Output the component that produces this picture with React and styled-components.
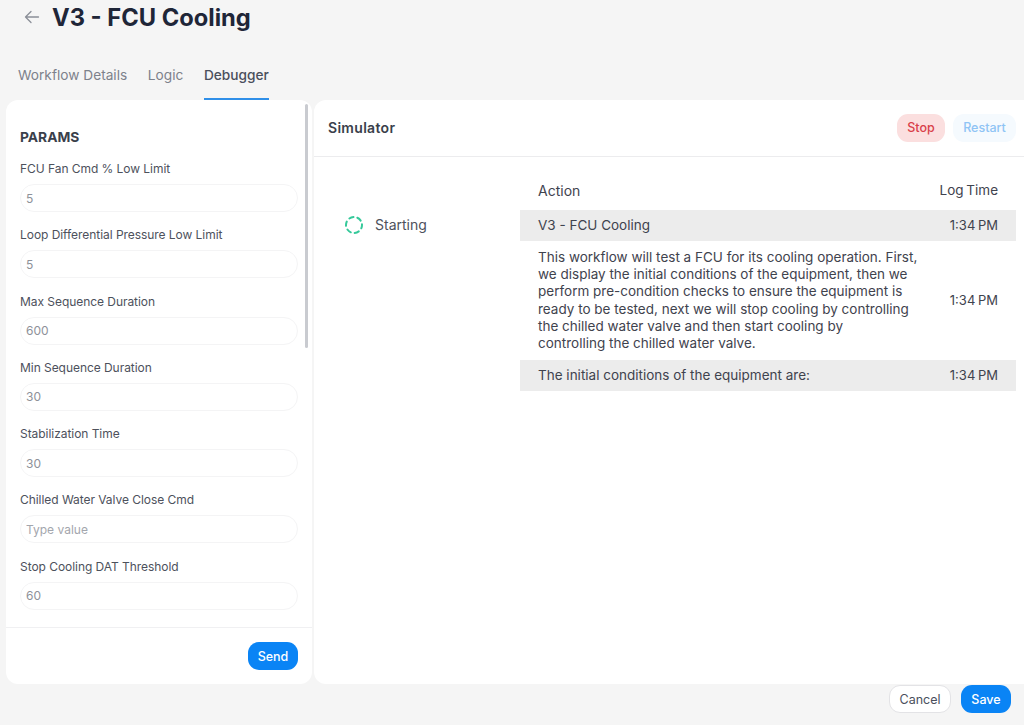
import React from "react";
import styled, { createGlobalStyle } from "styled-components";

const GlobalStyle = createGlobalStyle`
  html, body { margin: 0; padding: 0; background: #f5f5f5; }
  * { box-sizing: border-box; }
  body { font-family: Inter, "Noto Sans", sans-serif; color: #2f3542; }
`;

const Page = styled.div`
  width: 1024px;
  height: 725px;
  overflow: hidden;
  display: flex;
  flex-direction: column;
`;

const TitleBar = styled.div`
  height: 34px;
  display: flex;
  align-items: center;
  padding-left: 24px;
  gap: 12px;
`;

const BackButton = styled.button`
  border: 0;
  background: none;
  padding: 0;
  display: flex;
  color: #8b8f98;
`;

const Title = styled.h1`
  margin: 0;
  font-size: 23.7px;
  font-weight: 700;
  color: #1f2638;
`;

const Tabs = styled.div`
  display: flex;
  gap: 20.6px;
  padding: 24px 0 0 18px;
  height: 66px;
`;

const Tab = styled.div`
  height: 42px;
  padding-top: 9px;
  font-size: 13.7px;
  font-weight: ${(p) => (p.$active ? 500 : 400)};
  color: ${(p) => (p.$active ? "#4a4f5c" : "#7d818b")};
  border-bottom: 2px solid ${(p) => (p.$active ? "#2f8fe8" : "transparent")};
`;

const Panels = styled.div`
  display: flex;
  gap: 2px;
  padding-left: 6px;
  height: 584px;
`;

const ParamsPanel = styled.aside`
  position: relative;
  width: 306px;
  background: #fff;
  border-radius: 12px;
  display: flex;
  flex-direction: column;
  overflow: hidden;
`;

const ScrollThumb = styled.div`
  position: absolute;
  top: 4px;
  right: 4px;
  width: 3px;
  height: 244px;
  border-radius: 2px;
  background: #c9cbd0;
`;

const ParamsList = styled.div`
  flex: 1;
  overflow: hidden;
  padding: 29px 14px 0;
`;

const ParamsTitle = styled.h2`
  margin: 0 0 15px;
  font-size: 13.8px;
  line-height: 17px;
  font-weight: 700;
  color: #3a3f4b;
`;

const Field = styled.div`
  height: 66.3px;
`;

const FieldLabel = styled.label`
  display: block;
  font-size: 12px;
  line-height: 16px;
  font-weight: 400;
  letter-spacing: -0.05px;
  color: #4d515c;
  margin-bottom: 7px;
`;

const FieldInput = styled.input`
  display: block;
  width: 100%;
  height: 28px;
  border: 1px solid #f4f4f5;
  border-radius: 14px;
  padding: 0 5px;
  font: 400 12px Inter, sans-serif;
  color: #8e9199;
  background: #fff;
  outline: none;
  &::placeholder { color: #a3a6ad; opacity: 1; }
`;

const ParamsFooter = styled.div`
  height: 57px;
  border-top: 1px solid #f0f0f2;
  display: flex;
  justify-content: flex-end;
  align-items: flex-start;
  padding: 14px 14px 0 0;
`;

const Button = styled.button`
  height: 28px;
  width: ${(p) => p.$width}px;
  border-radius: 11px;
  padding: 0;
  font: ${(p) => (p.$outline ? 400 : 500)} 12.5px Inter, sans-serif;
  border: ${(p) => (p.$outline ? "1px solid #e3e3e6" : "0")};
  color: ${(p) => p.$color || "#fff"};
  background: ${(p) => p.$bg || "#0a84f5"};
`;

const SimPanel = styled.section`
  flex: 1;
  background: #fff;
  border-radius: 12px 0 0 12px;
  display: flex;
  flex-direction: column;
`;

const SimHeader = styled.header`
  height: 57px;
  flex-shrink: 0;
  border-bottom: 1px solid #ececee;
  display: flex;
  align-items: center;
  padding: 0 8px 1px 14px;
  gap: 8px;
`;

const SimTitle = styled.h2`
  margin: 0 auto 0 0;
  font-size: 14px;
  font-weight: 600;
  letter-spacing: 0.3px;
  color: #3a3f4b;
`;

const SimBody = styled.div`
  display: flex;
  padding: 22px 8px 0 0;
`;

const StatusCol = styled.div`
  width: 206px;
  padding: 36px 0 0 30px;
  display: flex;
  align-items: flex-start;
  gap: 11px;
  height: 62px;
  font-size: 14px;
  line-height: 20px;
  color: #4d515c;
`;

const Log = styled.div`
  flex: 1;
`;

const LogHead = styled.div`
  display: flex;
  justify-content: space-between;
  height: 31px;
  padding: 3px 18px 0;
  font-size: 14px;
  line-height: 17px;
  color: #3f434e;
`;

const LogRow = styled.div`
  display: flex;
  align-items: center;
  justify-content: space-between;
  padding: 6px 18px;
  height: ${(p) => p.$height}px;
  font-size: 13.5px;
  line-height: 17.2px;
  color: #3f434e;
  background: ${(p) => (p.$shade ? "#ececec" : "transparent")};
`;

const ActionCell = styled.div`
  max-width: 382px;
`;

const TimeCell = styled.div`
  white-space: nowrap;
  text-align: right;
  word-spacing: -1px;
  font-size: ${(p) => (p.$head ? "13.5px" : "13px")};
`;

const PageFooter = styled.footer`
  display: flex;
  justify-content: flex-end;
  gap: 10px;
  padding: 1px 13px 0 0;
`;

const params = [
  { label: "FCU Fan Cmd % Low Limit", value: "5" },
  { label: "Loop Differential Pressure Low Limit", value: "5" },
  { label: "Max Sequence Duration", value: "600" },
  { label: "Min Sequence Duration", value: "30" },
  { label: "Stabilization Time", value: "30" },
  { label: "Chilled Water Valve Close Cmd", value: "" },
  { label: "Stop Cooling DAT Threshold", value: "60" },
];

const logs = [
  { text: "V3 - FCU Cooling", height: 31, shade: true },
  {
    text: "This workflow will test a FCU for its cooling operation. First, we display the initial conditions of the equipment, then we perform pre-condition checks to ensure the equipment is ready to be tested, next we will stop cooling by controlling the chilled water valve and then start cooling by controlling\u00a0the chilled water valve.",
    height: 119,
  },
  { text: "The initial conditions of the equipment are:", height: 31, shade: true },
];

function Spinner() {
  return (
    <svg width="20" height="20" viewBox="0 0 20 20" fill="none">
      <circle cx="10" cy="10" r="8" stroke="#35c99a" strokeWidth="2" strokeLinecap="round" strokeDasharray="4.4 3.98" strokeDashoffset="1" />
    </svg>
  );
}

export default function App() {
  return (
    <Page>
      <GlobalStyle />
      <TitleBar>
        <BackButton aria-label="Back">
          <svg width="16" height="16" viewBox="0 0 16 16" fill="none" stroke="currentColor" strokeWidth="1.3" strokeLinecap="round" strokeLinejoin="round">
            <path d="M14.5 8H1.5M7 2.5 1.5 8 7 13.5" />
          </svg>
        </BackButton>
        <Title>V3 - FCU Cooling</Title>
      </TitleBar>
      <Tabs>
        <Tab>Workflow Details</Tab>
        <Tab>Logic</Tab>
        <Tab $active>Debugger</Tab>
      </Tabs>
      <Panels>
        <ParamsPanel>
          <ScrollThumb />
          <ParamsList>
            <ParamsTitle>PARAMS</ParamsTitle>
            {params.map((p) => (
              <Field key={p.label}>
                <FieldLabel>{p.label}</FieldLabel>
                <FieldInput defaultValue={p.value} placeholder="Type value" />
              </Field>
            ))}
          </ParamsList>
          <ParamsFooter>
            <Button $width={50}>Send</Button>
          </ParamsFooter>
        </ParamsPanel>
        <SimPanel>
          <SimHeader>
            <SimTitle>Simulator</SimTitle>
            <Button $width={48} $bg="#fbdfdf" $color="#d9414a">Stop</Button>
            <Button $width={63} $bg="#f5fafe" $color="#8fc4f5">Restart</Button>
          </SimHeader>
          <SimBody>
            <StatusCol>
              <Spinner />
              Starting
            </StatusCol>
            <Log>
              <LogHead>
                <ActionCell>Action</ActionCell>
                <TimeCell $head>Log Time</TimeCell>
              </LogHead>
              {logs.map((row) => (
                <LogRow key={row.text} $height={row.height} $shade={row.shade}>
                  <ActionCell>{row.text}</ActionCell>
                  <TimeCell>1:34 PM</TimeCell>
                </LogRow>
              ))}
            </Log>
          </SimBody>
        </SimPanel>
      </Panels>
      <PageFooter>
        <Button $width={62} $outline $bg="#fff" $color="#4a4f5c">Cancel</Button>
        <Button $width={50}>Save</Button>
      </PageFooter>
    </Page>
  );
}
